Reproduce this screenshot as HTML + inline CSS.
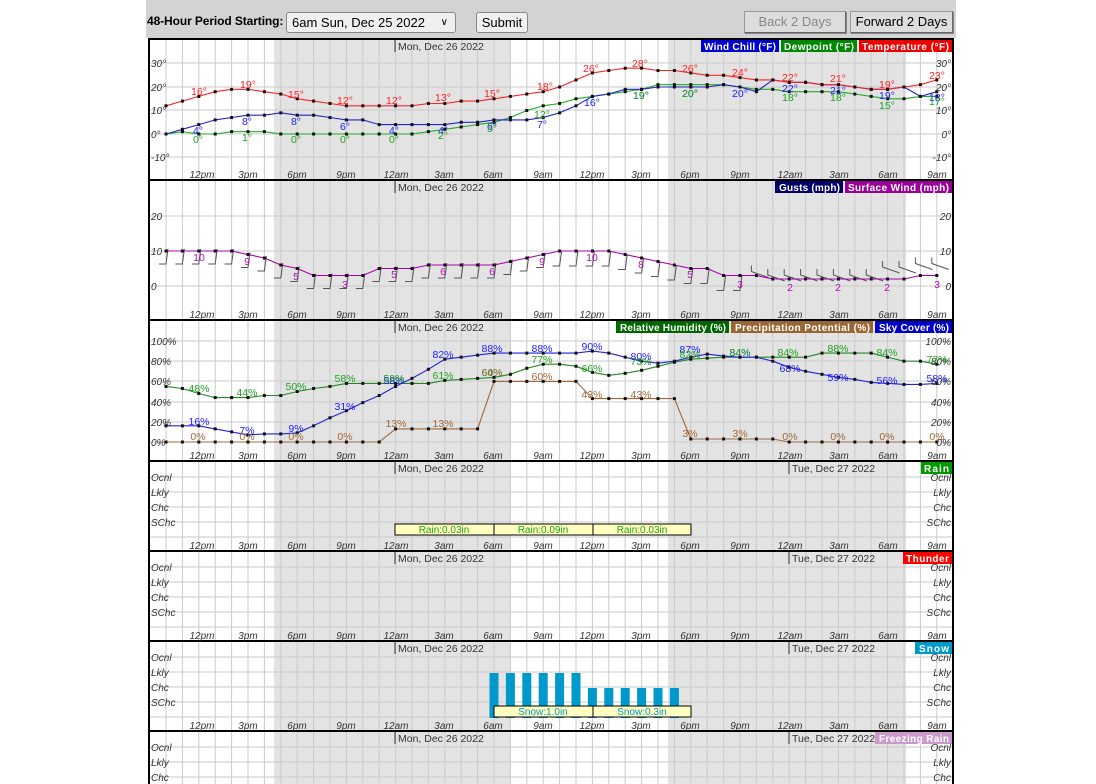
<!DOCTYPE html>
<html><head><meta charset="utf-8"><style>
html,body{margin:0;padding:0;background:#fff;width:1096px;height:784px;overflow:hidden;font-family:"Liberation Sans",sans-serif}
#top{position:absolute;left:146px;top:0;width:810px;height:38px;background:#d3d3d3}
.lbl{position:absolute;left:1px;top:14px;font-size:12px;font-weight:bold;color:#000;letter-spacing:-0.1px}
.sel{position:absolute;left:140px;top:12px;border:1px solid #888;border-radius:3px;background:#f0f0f0;font-size:13px;line-height:19px;padding-left:5px;box-sizing:border-box;width:170px;height:21px}
.sel span{position:absolute;right:7px;top:0;font-size:10px}
.btn{position:absolute;top:12px;height:21px;border:1px solid #888;border-radius:3px;background:#f0f0f0;font-size:13px;line-height:19px;text-align:center;box-sizing:border-box}
.nav{position:absolute;top:11px;height:22px;border:1px solid #999;border-right-color:#666;border-bottom-color:#666;background:#ddd;font-size:13px;line-height:20px;text-align:center;box-sizing:border-box;box-shadow:1px 1px 0 #888}
svg{position:absolute;left:0;top:0}
svg text{font-family:"Liberation Sans",sans-serif}
.ax{font-size:10px;font-style:italic;fill:#333}
.hd{font-size:10.5px;fill:#333}
.lg{font-size:10px;font-weight:bold;fill:#fff}
.r{fill:#ff2020;font-size:10.5px;text-anchor:middle}
.b{fill:#2020ff;font-size:10.5px;text-anchor:middle}
.g{fill:#22a022;font-size:10.5px;text-anchor:middle}
.m{fill:#b010b0;font-size:10.5px;text-anchor:middle}
.br{fill:#a0683a;font-size:10.5px;text-anchor:middle}
</style></head><body>
<div id="top">
<div class="lbl">48-Hour Period Starting:</div>
<div class="sel">6am Sun, Dec 25 2022<span>&#x2228;</span></div>
<div class="btn" style="left:330px;width:52px">Submit</div>
<div class="nav" style="left:598px;width:102px;color:#888">Back 2 Days</div>
<div class="nav" style="left:704px;width:103px;color:#000">Forward 2 Days</div>
</div>
<svg id="s" width="1096" height="784" xmlns="http://www.w3.org/2000/svg">
<g id="bg"></g>
<g id="fg"></g>
<g id="tx">
<text class="hd" x="398" y="50">Mon, Dec 26 2022</text>
<text class="hd" x="398" y="191">Mon, Dec 26 2022</text>
<text class="hd" x="398" y="331">Mon, Dec 26 2022</text>
<text class="hd" x="398" y="472">Mon, Dec 26 2022</text>
<text class="hd" x="792" y="472">Tue, Dec 27 2022</text>
<text class="hd" x="398" y="562">Mon, Dec 26 2022</text>
<text class="hd" x="792" y="562">Tue, Dec 27 2022</text>
<text class="hd" x="398" y="652">Mon, Dec 26 2022</text>
<text class="hd" x="792" y="652">Tue, Dec 27 2022</text>
<text class="hd" x="398" y="742">Mon, Dec 26 2022</text>
<text class="hd" x="792" y="742">Tue, Dec 27 2022</text>
<rect x="701" y="40" width="78" height="12" fill="#0000cc"/><text class="lg" x="704" y="50" textLength="72" lengthAdjust="spacing">Wind Chill (°F)</text>
<rect x="781" y="40" width="76" height="12" fill="#008800"/><text class="lg" x="784" y="50" textLength="70" lengthAdjust="spacing">Dewpoint (°F)</text>
<rect x="859" y="40" width="93" height="12" fill="#ee0000"/><text class="lg" x="862" y="50" textLength="87" lengthAdjust="spacing">Temperature (°F)</text>
<rect x="775" y="181" width="68" height="12" fill="#000066"/><text class="lg" x="779" y="191" textLength="61" lengthAdjust="spacing">Gusts (mph)</text>
<rect x="845" y="181" width="107" height="12" fill="#990099"/><text class="lg" x="848" y="191" textLength="101" lengthAdjust="spacing">Surface Wind (mph)</text>
<rect x="616" y="321" width="113" height="12" fill="#006600"/><text class="lg" x="620" y="331" textLength="106" lengthAdjust="spacing">Relative Humidity (%)</text>
<rect x="731" y="321" width="142" height="12" fill="#996633"/><text class="lg" x="735" y="331" textLength="135" lengthAdjust="spacing">Precipitation Potential (%)</text>
<rect x="875" y="321" width="77" height="12" fill="#0000cc"/><text class="lg" x="879" y="331" textLength="70" lengthAdjust="spacing">Sky Cover (%)</text>
<rect x="921" y="462" width="31" height="12" fill="#009900"/><text class="lg" x="924" y="472" textLength="25" lengthAdjust="spacing">Rain</text>
<rect x="903" y="552" width="49" height="12" fill="#ff0000"/><text class="lg" x="906" y="562" textLength="43" lengthAdjust="spacing">Thunder</text>
<rect x="915" y="642" width="37" height="12" fill="#0099cc"/><text class="lg" x="919" y="652" textLength="30" lengthAdjust="spacing">Snow</text>
<rect x="875" y="732" width="77" height="12" fill="#cc99cc"/><text class="lg" x="879" y="742" textLength="70" lengthAdjust="spacing">Freezing Rain</text>
<text class="ax" x="151" y="67">30°</text><text class="ax" x="151" y="91">20°</text><text class="ax" x="151" y="114">10°</text><text class="ax" x="151" y="138">0°</text><text class="ax" x="151" y="161">-10°</text>
<text class="ax" x="951" y="67" text-anchor="end">30°</text><text class="ax" x="951" y="91" text-anchor="end">20°</text><text class="ax" x="951" y="114" text-anchor="end">10°</text><text class="ax" x="951" y="138" text-anchor="end">0°</text><text class="ax" x="951" y="161" text-anchor="end">-10°</text>
<text class="ax" x="151" y="220">20</text><text class="ax" x="151" y="255">10</text><text class="ax" x="151" y="290">0</text>
<text class="ax" x="951" y="220" text-anchor="end">20</text><text class="ax" x="951" y="255" text-anchor="end">10</text><text class="ax" x="951" y="290" text-anchor="end">0</text>
<text class="ax" x="151" y="345">100%</text><text class="ax" x="151" y="365">80%</text><text class="ax" x="151" y="385">60%</text><text class="ax" x="151" y="406">40%</text><text class="ax" x="151" y="426">20%</text><text class="ax" x="151" y="446">0%</text>
<text class="ax" x="951" y="345" text-anchor="end">100%</text><text class="ax" x="951" y="365" text-anchor="end">80%</text><text class="ax" x="951" y="385" text-anchor="end">60%</text><text class="ax" x="951" y="406" text-anchor="end">40%</text><text class="ax" x="951" y="426" text-anchor="end">20%</text><text class="ax" x="951" y="446" text-anchor="end">0%</text>
<text class="ax" x="151" y="481">Ocnl</text><text class="ax" x="151" y="496">Lkly</text><text class="ax" x="151" y="511">Chc</text><text class="ax" x="151" y="526">SChc</text>
<text class="ax" x="951" y="481" text-anchor="end">Ocnl</text><text class="ax" x="951" y="496" text-anchor="end">Lkly</text><text class="ax" x="951" y="511" text-anchor="end">Chc</text><text class="ax" x="951" y="526" text-anchor="end">SChc</text>
<text class="ax" x="151" y="571">Ocnl</text><text class="ax" x="151" y="586">Lkly</text><text class="ax" x="151" y="601">Chc</text><text class="ax" x="151" y="616">SChc</text>
<text class="ax" x="951" y="571" text-anchor="end">Ocnl</text><text class="ax" x="951" y="586" text-anchor="end">Lkly</text><text class="ax" x="951" y="601" text-anchor="end">Chc</text><text class="ax" x="951" y="616" text-anchor="end">SChc</text>
<text class="ax" x="151" y="661">Ocnl</text><text class="ax" x="151" y="676">Lkly</text><text class="ax" x="151" y="691">Chc</text><text class="ax" x="151" y="706">SChc</text>
<text class="ax" x="951" y="661" text-anchor="end">Ocnl</text><text class="ax" x="951" y="676" text-anchor="end">Lkly</text><text class="ax" x="951" y="691" text-anchor="end">Chc</text><text class="ax" x="951" y="706" text-anchor="end">SChc</text>
<text class="ax" x="151" y="751">Ocnl</text><text class="ax" x="151" y="766">Lkly</text><text class="ax" x="151" y="781">Chc</text>
<text class="ax" x="951" y="751" text-anchor="end">Ocnl</text><text class="ax" x="951" y="766" text-anchor="end">Lkly</text><text class="ax" x="951" y="781" text-anchor="end">Chc</text>
</g>
<g id="xl" class="ax" text-anchor="middle">
<text x="202" y="178">12pm</text><text x="248" y="178">3pm</text><text x="297" y="178">6pm</text><text x="346" y="178">9pm</text><text x="396" y="178">12am</text><text x="444" y="178">3am</text><text x="493" y="178">6am</text><text x="543" y="178">9am</text><text x="592" y="178">12pm</text><text x="641" y="178">3pm</text><text x="690" y="178">6pm</text><text x="740" y="178">9pm</text><text x="790" y="178">12am</text><text x="839" y="178">3am</text><text x="888" y="178">6am</text><text x="937" y="178">9am</text>
<text x="202" y="318">12pm</text><text x="248" y="318">3pm</text><text x="297" y="318">6pm</text><text x="346" y="318">9pm</text><text x="396" y="318">12am</text><text x="444" y="318">3am</text><text x="493" y="318">6am</text><text x="543" y="318">9am</text><text x="592" y="318">12pm</text><text x="641" y="318">3pm</text><text x="690" y="318">6pm</text><text x="740" y="318">9pm</text><text x="790" y="318">12am</text><text x="839" y="318">3am</text><text x="888" y="318">6am</text><text x="937" y="318">9am</text>
<text x="202" y="459">12pm</text><text x="248" y="459">3pm</text><text x="297" y="459">6pm</text><text x="346" y="459">9pm</text><text x="396" y="459">12am</text><text x="444" y="459">3am</text><text x="493" y="459">6am</text><text x="543" y="459">9am</text><text x="592" y="459">12pm</text><text x="641" y="459">3pm</text><text x="690" y="459">6pm</text><text x="740" y="459">9pm</text><text x="790" y="459">12am</text><text x="839" y="459">3am</text><text x="888" y="459">6am</text><text x="937" y="459">9am</text>
<text x="202" y="549">12pm</text><text x="248" y="549">3pm</text><text x="297" y="549">6pm</text><text x="346" y="549">9pm</text><text x="396" y="549">12am</text><text x="444" y="549">3am</text><text x="493" y="549">6am</text><text x="543" y="549">9am</text><text x="592" y="549">12pm</text><text x="641" y="549">3pm</text><text x="690" y="549">6pm</text><text x="740" y="549">9pm</text><text x="790" y="549">12am</text><text x="839" y="549">3am</text><text x="888" y="549">6am</text><text x="937" y="549">9am</text>
<text x="202" y="639">12pm</text><text x="248" y="639">3pm</text><text x="297" y="639">6pm</text><text x="346" y="639">9pm</text><text x="396" y="639">12am</text><text x="444" y="639">3am</text><text x="493" y="639">6am</text><text x="543" y="639">9am</text><text x="592" y="639">12pm</text><text x="641" y="639">3pm</text><text x="690" y="639">6pm</text><text x="740" y="639">9pm</text><text x="790" y="639">12am</text><text x="839" y="639">3am</text><text x="888" y="639">6am</text><text x="937" y="639">9am</text>
<text x="202" y="729">12pm</text><text x="248" y="729">3pm</text><text x="297" y="729">6pm</text><text x="346" y="729">9pm</text><text x="396" y="729">12am</text><text x="444" y="729">3am</text><text x="493" y="729">6am</text><text x="543" y="729">9am</text><text x="592" y="729">12pm</text><text x="641" y="729">3pm</text><text x="690" y="729">6pm</text><text x="740" y="729">9pm</text><text x="790" y="729">12am</text><text x="839" y="729">3am</text><text x="888" y="729">6am</text><text x="937" y="729">9am</text>
</g>
<g id="boxes">
<rect x="395" y="524" width="99" height="11" fill="#ffffc0" stroke="#000"/><text class="g" x="444" y="533" style="font-size:10px">Rain:0.03in</text>
<rect x="494" y="524" width="99" height="11" fill="#ffffc0" stroke="#000"/><text class="g" x="543" y="533" style="font-size:10px">Rain:0.09in</text>
<rect x="593" y="524" width="98" height="11" fill="#ffffc0" stroke="#000"/><text class="g" x="642" y="533" style="font-size:10px">Rain:0.03in</text>
</g>
<g id="snow"></g>
<g id="sbox">
<rect x="494" y="706" width="99" height="11" fill="#ffffc0" stroke="#000"/><text x="543" y="715" style="font-size:10px;fill:#0099cc;text-anchor:middle">Snow:1.0in</text>
<rect x="593" y="706" width="98" height="11" fill="#ffffc0" stroke="#000"/><text x="642" y="715" style="font-size:10px;fill:#0099cc;text-anchor:middle">Snow:0.3in</text>
</g>
<g id="vl">
<text class="r" x="199" y="95">16°</text><text class="r" x="248" y="88">19°</text><text class="r" x="296" y="98">15°</text><text class="r" x="345" y="104">12°</text><text class="r" x="394" y="104">12°</text><text class="r" x="443" y="101">13°</text><text class="r" x="492" y="97">15°</text><text class="r" x="545" y="90">18°</text><text class="r" x="591" y="72">26°</text><text class="r" x="640" y="67">28°</text><text class="r" x="690" y="72">26°</text><text class="r" x="740" y="76">24°</text><text class="r" x="790" y="81">22°</text><text class="r" x="838" y="82">21°</text><text class="r" x="887" y="88">19°</text><text class="r" x="937" y="79">23°</text>
<text class="b" x="198" y="134">4°</text><text class="b" x="247" y="125">8°</text><text class="b" x="296" y="125">8°</text><text class="b" x="345" y="130">6°</text><text class="b" x="394" y="134">4°</text><text class="b" x="443" y="134">4°</text><text class="b" x="492" y="130">6°</text><text class="b" x="542" y="128">7°</text><text class="b" x="592" y="106">16°</text><text class="b" x="641" y="99">19°</text><text class="b" x="690" y="97">20°</text><text class="b" x="740" y="97">20°</text><text class="b" x="790" y="92">22°</text><text class="b" x="838" y="94">21°</text><text class="b" x="887" y="99">19°</text><text class="b" x="937" y="101">18°</text>
<text class="g" x="198" y="143">0°</text><text class="g" x="247" y="141">1°</text><text class="g" x="296" y="143">0°</text><text class="g" x="345" y="143">0°</text><text class="g" x="394" y="143">0°</text><text class="g" x="443" y="139">2°</text><text class="g" x="492" y="132">5°</text><text class="g" x="542" y="118">12°</text><text class="g" x="641" y="99">19°</text><text class="g" x="690" y="97">20°</text><text class="g" x="790" y="101">18°</text><text class="g" x="838" y="101">18°</text><text class="g" x="887" y="109">15°</text><text class="g" x="937" y="105">17°</text>
<text class="m" x="199" y="261">10</text><text class="m" x="247" y="265">9</text><text class="m" x="296" y="280">5</text><text class="m" x="345" y="288">3</text><text class="m" x="394" y="278">5</text><text class="m" x="443" y="275">6</text><text class="m" x="492" y="275">6</text><text class="m" x="542" y="265">9</text><text class="m" x="592" y="261">10</text><text class="m" x="641" y="268">8</text><text class="m" x="690" y="278">5</text><text class="m" x="740" y="288">3</text><text class="m" x="790" y="291">2</text><text class="m" x="838" y="291">2</text><text class="m" x="887" y="291">2</text><text class="m" x="937" y="288">3</text>
<text class="b" x="199" y="425">16%</text><text class="b" x="247" y="434">7%</text><text class="b" x="296" y="432">9%</text><text class="b" x="345" y="410">31%</text><text class="b" x="394" y="384">58%</text><text class="b" x="443" y="358">82%</text><text class="b" x="492" y="352">88%</text><text class="b" x="542" y="352">88%</text><text class="b" x="592" y="350">90%</text><text class="b" x="641" y="360">80%</text><text class="b" x="690" y="353">87%</text><text class="b" x="740" y="356">84%</text><text class="b" x="790" y="372">68%</text><text class="b" x="838" y="381">59%</text><text class="b" x="887" y="384">56%</text><text class="b" x="937" y="382">58%</text>
<text class="g" x="199" y="392">48%</text><text class="g" x="247" y="396">44%</text><text class="g" x="296" y="390">50%</text><text class="g" x="345" y="382">58%</text><text class="g" x="394" y="382">58%</text><text class="g" x="443" y="379">61%</text><text class="g" x="492" y="376">64%</text><text class="g" x="542" y="363">77%</text><text class="g" x="592" y="372">66%</text><text class="g" x="641" y="365">73%</text><text class="g" x="690" y="358">82%</text><text class="g" x="740" y="356">84%</text><text class="g" x="788" y="356">84%</text><text class="g" x="838" y="352">88%</text><text class="g" x="887" y="356">84%</text><text class="g" x="937" y="363">77%</text>
<text class="br" x="198" y="440">0%</text><text class="br" x="247" y="440">0%</text><text class="br" x="296" y="440">0%</text><text class="br" x="345" y="440">0%</text><text class="br" x="396" y="427">13%</text><text class="br" x="443" y="427">13%</text><text class="br" x="492" y="376">60%</text><text class="br" x="542" y="380">60%</text><text class="br" x="592" y="398">43%</text><text class="br" x="641" y="398">43%</text><text class="br" x="690" y="437">3%</text><text class="br" x="740" y="437">3%</text><text class="br" x="790" y="440">0%</text><text class="br" x="838" y="440">0%</text><text class="br" x="887" y="440">0%</text><text class="br" x="937" y="440">0%</text>
</g>
</svg>
<script>
(function(){
var NS="http://www.w3.org/2000/svg",bg=document.getElementById('bg'),fg=document.getElementById('fg');
function el(p,n,a){var e=document.createElementNS(NS,n);for(var k in a)e.setAttribute(k,a[k]);p.appendChild(e);return e;}
function X(i){return 166+16.4*i;}
var panels=[[39,180,[63,87,110,134,157]],[180,320,[216,251,286]],[320,461,[341,361,381,402,422,442]],
[461,551,[477,492,507,522,537]],[551,641,[567,582,597,612,627]],[641,731,[657,672,687,702,717]],[731,821,[747,762,777,792]]];
panels.forEach(function(p,k){
 var t=p[0],b=p[1];
 el(bg,'rect',{x:274,y:t,width:237,height:b-t,fill:'#e3e3e3'});
 el(bg,'rect',{x:668,y:t,width:238,height:b-t,fill:'#e3e3e3'});
 for(var i=0;i<48;i++)el(bg,'line',{x1:X(i),y1:t,x2:X(i),y2:b,stroke:'#cacaca','stroke-width':1});
 p[2].forEach(function(y){el(bg,'line',{x1:149,y1:y,x2:953,y2:y,stroke:'#cacaca','stroke-width':1});});
 el(bg,'line',{x1:395,y1:t+1,x2:395,y2:t+13,stroke:'#333'});
 if(k>=3)el(bg,'line',{x1:789,y1:t+1,x2:789,y2:t+13,stroke:'#333'});
 el(bg,'rect',{x:149,y:t,width:804,height:b-t,fill:'none',stroke:'#000','stroke-width':2});
});
function line(d,f,c){var pts=d.map(function(v,i){return X(i).toFixed(1)+','+f(v).toFixed(1);}).join(' ');
 el(fg,'polyline',{points:pts,fill:'none',stroke:c,'stroke-width':1.1});
 d.forEach(function(v,i){el(fg,'rect',{x:X(i)-1.5,y:f(v)-1.5,width:3,height:3,fill:'#111'});});}
var T=[12,14,16,18,19,19,18,17,15,14,13,12,12,12,12,12,13,13,14,14,15,16,17,18,20,23,26,27,28,28,27,27,26,25,25,24,23,23,22,22,21,21,20,19,19,20,21,23];
var W=[0,2,4,6,7,8,8,9,8,8,7,6,6,4,4,4,4,4,5,5,6,6,6,7,9,12,16,17,19,19,20,20,20,20,21,20,18,23,22,22,21,21,20,19,19,20,16,18];
var D=[0,1,0,0,1,1,1,0,0,0,0,0,0,0,0,0,1,2,3,4,5,7,10,12,13,15,16,17,18,19,21,21,21,21,21,20,19,19,18,18,18,18,17,16,15,15,16,16];
var tf=function(v){return 134-v*2.35;};
line(D,tf,'#22aa22');line(W,tf,'#2222cc');line(T,tf,'#ff2222');
var S=[10,10,10,10,10,9,8,6,5,3,3,3,3,5,5,5,6,6,6,6,6,7,8,9,10,10,10,10,9,8,7,6,5,5,3,3,3,2,2,2,2,2,2,2,2,2,3,3];
var wf=function(v){return 286-v*3.5;};
S.forEach(function(v,i){var x=X(i),y=wf(v);var yb=y+(i<24?10:(i<36?12:(i<44?0:-8)));
 var d=i<36?('M'+(x-7)+' '+(yb+3)+' L'+x+' '+(yb+3)+' L'+(x+2)+' '+(yb-12)):('M'+(x-5)+' '+(yb-10)+' L'+(x-5)+' '+(yb-4)+' L'+(x+12)+' '+(yb+2));
 el(fg,'path',{d:d,fill:'none',stroke:'#555','stroke-width':1});});
line(S,wf,'#aa00aa');
var pf=function(v){return 442-v*1.01;};
var RH=[55,53,48,44,44,44,46,46,50,53,55,58,58,58,58,58,58,61,62,63,64,67,73,77,77,75,69,66,68,71,75,79,82,83,84,84,84,84,84,84,88,88,88,88,84,80,80,77];
var PP=[0,0,0,0,0,0,0,0,0,0,0,0,0,0,13,13,13,13,13,13,60,60,60,60,60,60,43,43,43,43,43,43,3,3,3,3,3,3,0,0,0,0,0,0,0,0,0,0];
var SK=[16,16,16,13,10,7,8,8,9,16,24,31,39,46,55,63,72,82,84,86,88,88,88,88,88,88,90,88,84,80,78,80,84,87,85,84,84,80,74,70,67,64,62,59,58,57,57,58];
line(PP,pf,'#a0683a');line(RH,pf,'#228822');line(SK,pf,'#2222dd');
var sn=document.getElementById('snow');
for(var i=20;i<32;i++){var top=i<26?673:688;el(sn,'rect',{x:X(i)-4.5,y:top,width:9,height:718-top,fill:'#0099cc'});}
})();
</script>
</body></html>
